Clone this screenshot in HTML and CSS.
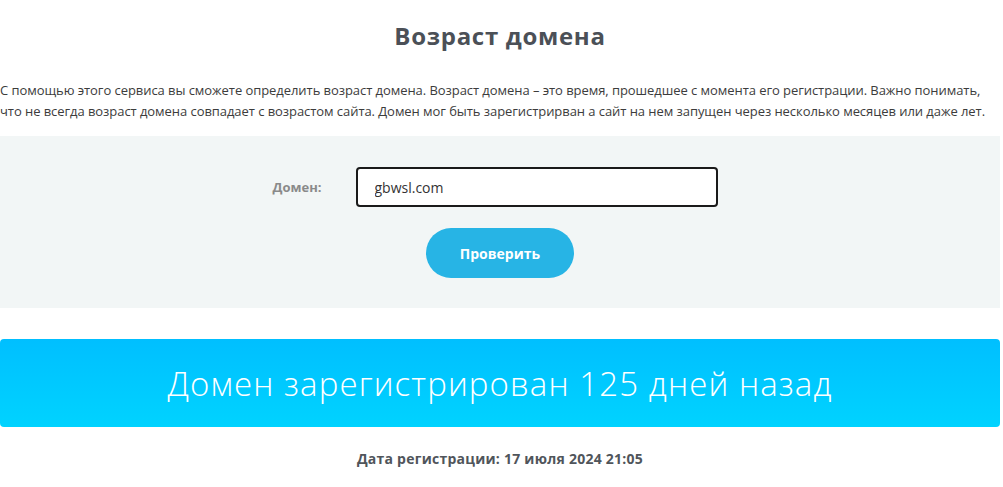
FILE: index.html
```html
<!DOCTYPE html>
<html lang="ru">
<head>
  <meta charset="UTF-8" />
  <title>Возраст домена</title>
  <link rel="stylesheet" href="styles.css">
</head>
<body>
  <div class="page">
    <h1 class="title">Возраст домена</h1>

    <p class="intro">С помощью этого сервиса вы сможете определить возраст домена. Возраст домена – это время, прошедшее с момента его регистрации. Важно понимать, что не всегда возраст домена совпадает с возрастом сайта. Домен мог быть зарегистрирван а сайт на нем запущен через несколько месяцев или даже лет.</p>

    <form class="check-form">
      <div class="field">
        <label for="domain">Домен:</label>
        <input type="text" id="domain" value="gbwsl.com" />
      </div>
      <button type="button">Проверить</button>
    </form>

    <div class="result">Домен зарегистрирован 125 дней назад</div>

    <p class="reg-date">Дата регистрации: 17 июля 2024 21:05</p>
  </div>
</body>
</html>
```

FILE: styles.css
```css
body {
  margin: 0;
  padding: 0;
  background: #fff;
  font-family: 'Open Sans', 'Noto Sans', sans-serif;
  color: #333;
}

.page {
  width: 1000px;
}

.title {
  margin: 0;
  padding-top: 19px;
  height: 34px;
  text-align: center;
  font-size: 24px;
  line-height: 34px;
  font-weight: 700;
  letter-spacing: 0.7px;
  color: #4b5057;
}

.intro {
  margin: 27px 0 14px;
  font-size: 13px;
  line-height: 21px;
  letter-spacing: -0.06px;
  color: #3c3c3c;
}

.check-form {
  background: #f2f6f6;
  padding: 31px 0 30px;
  display: flex;
  flex-direction: column;
  align-items: center;
  gap: 21px;
}

.field {
  display: flex;
  align-items: center;
  margin-left: -10px;
}

label {
  width: 83px;
  font-size: 13px;
  font-weight: 700;
  color: #8a8a8a;
}

input {
  box-sizing: border-box;
  width: 362px;
  height: 40px;
  padding: 0 17px;
  border: 2px solid #1a1a1a;
  border-radius: 4px;
  font-family: inherit;
  font-size: 14px;
  color: #333;
  outline: none;
}

button {
  width: 148px;
  height: 50px;
  border: none;
  border-radius: 25px;
  background: #27b4e5;
  color: #fff;
  font-family: inherit;
  font-size: 14px;
  font-weight: 700;
  cursor: pointer;
}

.result {
  margin-top: 31px;
  height: 88px;
  border-radius: 4px;
  background: linear-gradient(180deg, #00bfff, #00d3ff);
  color: #fff;
  font-size: 33px;
  font-weight: 300;
  letter-spacing: 1.1px;
  display: flex;
  align-items: center;
  justify-content: center;
}

.reg-date {
  margin: 22px 0 0;
  text-align: center;
  font-size: 14px;
  font-weight: 700;
  letter-spacing: 0.25px;
  color: #50555b;
}
```
